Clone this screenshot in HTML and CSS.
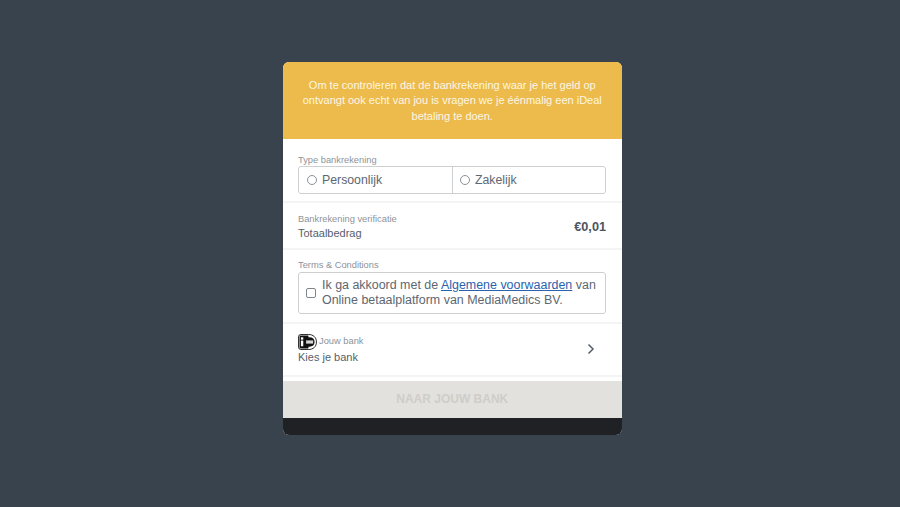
FILE: index.html
```html
<!DOCTYPE html>
<html lang="nl">
<head>
<meta charset="utf-8">
<title>Bankrekening verificatie</title>
<link rel="stylesheet" href="styles.css">
</head>
<body>
<main class="card">
  <header class="notice">Om te controleren dat de bankrekening waar je het geld op ontvangt ook echt van jou is vragen we je éénmalig een iDeal betaling te doen.</header>
  <section class="row row-type">
    <div class="label">Type bankrekening</div>
    <div class="segmented">
      <div class="option"><span class="radio"></span>Persoonlijk</div>
      <div class="option"><span class="radio"></span>Zakelijk</div>
    </div>
  </section>
  <section class="row row-total">
    <div>
      <div class="label">Bankrekening verificatie</div>
      <div class="value">Totaalbedrag</div>
    </div>
    <div class="amount">€0,01</div>
  </section>
  <section class="row row-terms">
    <div class="label">Terms &amp; Conditions</div>
    <div class="terms">
      <span class="checkbox"></span>
      <p>Ik ga akkoord met de <a href="#">Algemene voorwaarden</a> van Online betaalplatform van MediaMedics BV.</p>
    </div>
  </section>
  <section class="row row-bank">
    <div>
      <div class="bank-head">
        <svg class="ideal" viewBox="0 0 20 17" aria-hidden="true">
          <path d="M3 .5h8c5 0 8.500 3 8.500 8s-3.500 8-8.500 8H3a2.500 2.500 0 0 1-2.500-2.500V3A2.500 2.500 0 0 1 3 .5z" fill="#fff" stroke="#1c1c1c"/>
          <path d="M3 1.500h8v14H3a1.500 1.500 0 0 1-1.500-1.500V3A1.500 1.500 0 0 1 3 1.500z" fill="#111"/>
          <rect x="3" y="3.500" width="2.500" height="2.500" fill="#fff"/>
          <rect x="3" y="7" width="2.500" height="6" fill="#fff"/>
          <path d="M7 3.500h5c3.500 0 5.500 2 5.500 5s-2 5-5.500 5H7z" fill="#111"/>
          <rect x="8.500" y="6.800" width="7.500" height="3.400" fill="#d6d6d6"/>
        </svg>
        <span class="label">Jouw bank</span>
      </div>
      <div class="value">Kies je bank</div>
    </div>
    <svg class="chevron" viewBox="0 0 8 12" aria-hidden="true"><path d="M1.500 1.500 6 6l-4.500 4.500" fill="none" stroke="#56606b" stroke-width="1.500"/></svg>
  </section>
  <div class="gap"></div>
  <button class="submit" type="button">NAAR JOUW BANK</button>
  <footer class="foot"></footer>
</main>
</body>
</html>
```

FILE: styles.css
```css
* { box-sizing: border-box; }
html, body { height: 100%; }
body {
  margin: 0;
  background: #39434e;
  font-family: "Liberation Sans", Arial, sans-serif;
  color: #4b5560;
  padding: 62px 0 0 283px;
}
.card {
  width: 338.500px;
  height: 373px;
  display: flex;
  flex-direction: column;
  background: #fff;
  border-radius: 6px;
  overflow: hidden;
}
.notice {
  height: 77px;
  flex: none;
  padding: 15.500px 15px 0;
  background: #ecbb4b;
  color: #fdf6e4;
  font-size: 11px;
  line-height: 15.500px;
  text-align: center;
}
.row {
  flex: none;
  padding: 0 15.500px 0 15px;
  border-bottom: 2px solid #f4f4f3;
}
.label {
  font-size: 9.300px;
  line-height: 11px;
  color: #8d939a;
}
.value {
  font-size: 11px;
  line-height: 14px;
  color: #56606b;
}
.row-type { height: 64px; padding-top: 16px; }
.segmented {
  display: flex;
  height: 28px;
  border: 1px solid #ccd0d3;
  border-radius: 3px;
}
.option {
  flex: 1;
  display: flex;
  align-items: center;
  padding-left: 8px;
  font-size: 12.300px;
  color: #5d6772;
}
.option + .option { border-left: 1px solid #ccd0d3; padding-left: 7px; }
.radio {
  width: 10px;
  height: 10px;
  margin-right: 5px;
  border: 1px solid #8b9198;
  border-radius: 50%;
}
.row-total {
  height: 47px;
  padding-top: 11px;
  display: flex;
  justify-content: space-between;
  align-items: flex-start;
}
.row-total .value { margin-top: 1px; }
.amount {
  margin-top: 5px;
  font-size: 12.700px;
  line-height: 16px;
  font-weight: 700;
  color: #4b5560;
}
.row-terms { height: 74px; padding-top: 10px; }
.terms {
  display: flex;
  align-items: center;
  height: 42px;
  margin-top: 1px;
  padding: 0 7px;
  border: 1px solid #ccd0d3;
  border-radius: 3px;
}
.terms p {
  margin: 0;
  font-size: 12.450px;
  line-height: 15px;
  color: #5d6772;
}
.terms a { color: #2a62ad; }
.checkbox {
  flex: none;
  width: 10px;
  height: 10px;
  margin-right: 6px;
  border: 1px solid #7f868d;
  border-radius: 2px;
}
.row-bank {
  height: 53px;
  padding: 0 26.500px 2px 15px;
  display: flex;
  justify-content: space-between;
  align-items: center;
}
.bank-head { display: flex; align-items: center; gap: 2px; }
.ideal { width: 19px; height: 16px; }
.chevron { width: 8px; height: 12px; }
.gap { height: 4px; flex: none; }
.submit {
  flex: none;
  height: 37px;
  border: 0;
  padding: 0 0 2px;
  background: #e3e1dd;
  color: #cfcdc9;
  font: 700 12px "Liberation Sans", Arial, sans-serif;
}
.foot {
  flex: 1;
  background: #1f2124;
}
```
